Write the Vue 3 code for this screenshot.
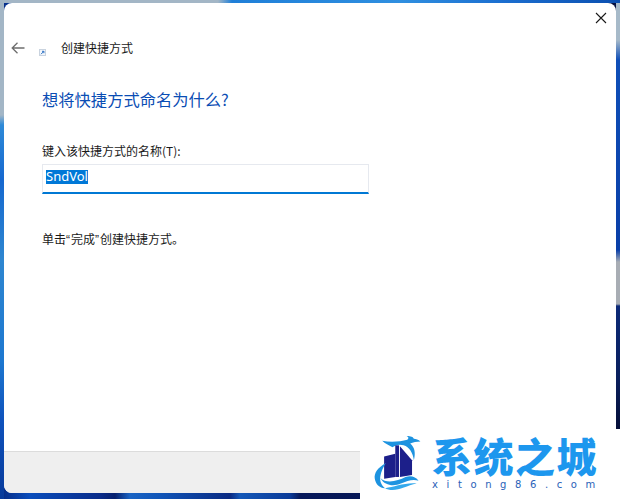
<script setup>
const title = '创建快捷方式'
</script>

<template>
  <div class="desktop">
    <div class="window">
      <div class="content">
        <div class="close-row">
          <svg width="12" height="12" viewBox="0 0 12 12"><path d="M1 1L11 11M11 1L1 11" stroke="#1a1a1a" stroke-width="1.1" fill="none"/></svg>
        </div>
        <div class="header">
          <svg class="back" width="14" height="12" viewBox="0 0 14 12"><path d="M6.5 .8L1.2 6L6.5 11.2M1.2 6H13.5" stroke="#6e6e6e" stroke-width="1.3" fill="none"/></svg>
          <svg class="shortcut" width="7" height="7" viewBox="0 0 7 7"><rect x=".5" y=".5" width="6" height="6" fill="#f4f7fb" stroke="#c9d3df"/><path d="M2 5.2L4.6 2.6M3 2.3H4.9V4.2" stroke="#2a6fc4" stroke-width="1" fill="none"/></svg>
          <span class="title">{{ title }}</span>
        </div>
        <h1 class="heading">想将快捷方式命名为什么?</h1>
        <div class="label">键入该快捷方式的名称(T):</div>
        <div class="input"><span class="selected">SndVol</span></div>
        <div class="hint">单击<span class="quote">“</span>完成<span class="quote">”</span>创建快捷方式。</div>
      </div>
      <div class="footer"></div>
    </div>

    <div class="watermark">
      <svg class="logo" width="54" height="58" viewBox="0 0 58 62">
        <path d="M11 7C20 9 30 8 38 6C40 4 39 3 37 2C42 2 44 3 45 5C47 5 50 6 52 8C48 8 44 9 41 10C46 14 47 20 45 28C44 20 40 14 34 12C28 10 24 13 22 14C18 12 14 10 11 7Z" fill="#1d93e0"/>
        <path d="M13 24L25 21V46L13 48Z" fill="#1c1f8a"/>
        <path d="M25 12H29V46H25Z" fill="#1c1f8a"/>
        <path d="M30 13L43 28V44L30 46Z" fill="#1c1f8a"/>
        <path d="M15 31C6 36 2 42 3 48C4 54 8 58 14 58C10 55 8 50 9 45C10 40 12 35 15 31Z" fill="#1d93e0"/>
        <path d="M9 47C16 54 28 50 36 46C42 44 47 46 50 50C44 48 38 50 31 53C24 56 14 56 9 47Z" fill="#1d93e0"/>
        <path d="M14 58C24 57 34 52 48 53C38 55 30 60 22 60C19 60 16 59 14 58Z" fill="#33a8ec"/>
      </svg>
      <div class="brand">
        <div class="brand-name">系统之城</div>
        <div class="brand-url">xitong86.com</div>
      </div>
    </div>
  </div>
</template>

<style scoped>
.desktop {
  position: relative;
  width: 620px;
  height: 499px;
  overflow: hidden;
  padding: 3px 4px 6px;
  box-sizing: border-box;
  font-family: "Noto Sans CJK SC", "Noto Sans", sans-serif;
  background:
    linear-gradient(90deg, #a3b6c6 0, #a3b6c6 218px, #1f7fd8 232px, #2f8fe0 400px, #1c6fd0 500px, #0b4fb0 100%) top / 100% 3px no-repeat,
    linear-gradient(180deg, #a7bac9 0, #a7bac9 40px, #0f4fb8 60px, #0a3fa8 250px, #a8adb4 262px, #a8adb4 304px, #0c2a78 306px, #0a1f5c 380px, #050f38 428px) right top / 4px 100% no-repeat,
    linear-gradient(180deg, #a3b6c6 0, #a3b6c6 115px, #2e8ad8 125px, #1668cf 180px, #2e86d0 260px, #1d78d0 360px, #0f52bc 420px, #073a9a 499px) left top / 4px 100% no-repeat,
    linear-gradient(90deg, #062a82 0, #0a4dbc 30px, #0a2c8a 100px, #06206e 115px, #1a64c4 130px, #1055b8 160px, #0a2a82 230px, #1458b8 240px, #0a3a98 290px, #06185a 300px, #041040 100%);
}
.window {
  display: flex;
  flex-direction: column;
  height: 490px;
  background: #fff;
  border-radius: 8px;
  overflow: hidden;
}
.content {
  flex: 1;
  padding: 0 0 0 7px;
  color: #1a1a1a;
}
.close-row {
  display: flex;
  justify-content: flex-end;
  padding: 9px 9px 0 0;
  height: 12px;
}
.header {
  display: flex;
  align-items: center;
  height: 20px;
  margin-top: 14px;
}
.back {
  margin-right: 14px;
}
.shortcut {
  margin-top: 8px;
  margin-right: 15px;
}
.title {
  font-size: 12px;
  line-height: 20px;
}
.heading {
  margin: 30px 0 0 31px;
  font-size: 16.3px;
  font-weight: 400;
  line-height: 22px;
  color: #0a4db4;
}
.label {
  margin: 32px 0 0 31px;
  font-size: 12px;
  line-height: 18px;
}
.input {
  margin: 4px 0 0 31px;
  width: 327px;
  height: 30px;
  box-sizing: border-box;
  border: 1px solid #e6e9ef;
  border-bottom: 2px solid #0078d4;
  padding: 5px 0 0 3px;
}
.selected {
  display: block;
  width: 42px;
  height: 14px;
  line-height: 12px;
  background: #0078d7;
  color: #fff;
  font-family: "Noto Sans", sans-serif;
  font-size: 13px;
  white-space: nowrap;
}
.hint {
  margin: 36px 0 0 31px;
  font-size: 12px;
  line-height: 18px;
}
.quote {
  font-family: "Liberation Sans", sans-serif;
  display: inline-block;
  width: 5px;
}
.footer {
  height: 41px;
  background: #efefef;
  border-top: 1px solid #dcdcdc;
}
.watermark {
  position: absolute;
  left: 360px;
  top: 429px;
  width: 260px;
  height: 70px;
  background: #fff;
  display: flex;
  align-items: flex-start;
  box-sizing: border-box;
  padding: 5px 0 0 12px;
}
.logo {
  flex: none;
}
.brand {
  margin-left: 6px;
}
.brand-name {
  font-size: 40px;
  line-height: 42px;
  font-weight: 900;
  color: #1d97ee;
  letter-spacing: 1.5px;
  white-space: nowrap;
}
.brand-url {
  margin-top: 3px;
  font-family: "DejaVu Sans", sans-serif;
  font-size: 10px;
  line-height: 12px;
  color: #2a62b8;
  letter-spacing: 8.6px;
  white-space: nowrap;
}
</style>
